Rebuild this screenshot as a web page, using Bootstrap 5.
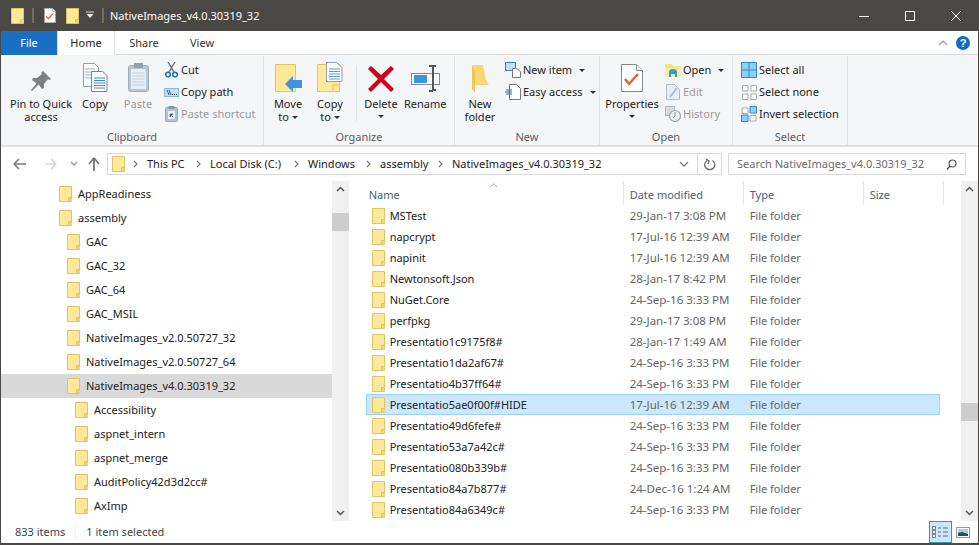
<!doctype html>
<html lang="en"><head><meta charset="utf-8"><title>NativeImages_v4.0.30319_32</title>
<link href="https://cdn.jsdelivr.net/npm/bootstrap@5.3.0/dist/css/bootstrap.min.css" rel="stylesheet">
<style>
html,body{height:545px;overflow:hidden;background:#fff}
body{font-family:"Noto Sans","Open Sans",sans-serif;font-size:11px;color:#222;line-height:1.2}
.win{width:979px;height:545px;border:solid #4a4845;border-width:0 1px 2px 1px;overflow:hidden}
svg{display:block;flex:none}
.titlebar{height:31px;background:#4a4845;color:#fff;font-size:11px;padding-left:11px;margin:0 -1px}
.qsep{width:2px;height:15px;background:#6f6d6a}
.q-s1{margin-left:8px}.q-d{margin-left:10px}.q-f{margin-left:10px}.q-c{margin-left:7px}.q-s2{margin-left:8px}.q-t{margin-left:6px}
.wc{width:46px;height:31px}
.tabrow{height:24px;border-bottom:1px solid #dadbdc}
.tabf{width:56px;height:24px;background:#1a6fc4;color:#fff}
.tabh{width:58px;height:24px;background:#fff;border:solid #dadbdc;border-width:0 1px;margin-bottom:-1px}
.tabo{width:58px;height:23px;color:#333}
.ribbon{height:92px;background:#f5f6f7;border-bottom:2px solid #dfe0e1}
.grp{height:90px;border-right:1px solid #dfe1e3;margin-top:1px}
.g-clip{width:263px}.g-org{width:191px}.g-new{width:145px}.g-open{width:133px}.g-sel{width:115px}
.grp-name{height:15px;color:#5c5c5c;text-align:center;margin-top:auto;margin-bottom:1px}
.grp-body{padding-top:6px;height:74px}
.b-org{padding-left:6px}.b-new{padding-left:7px;gap:7px}.b-open{padding-left:3px;gap:4px}.b-sel{padding-left:8px;margin-top:-3px}
.lbtn{text-align:center;flex:none}
.w36{width:36px}.w72{width:72px}.w50{width:50px}.w48{width:48px}.w46{width:46px}.w42{width:42px}.w58{width:58px}
.lbtn .ico{height:30px;display:flex;justify-content:center;align-items:flex-end}
.lbtn .txt{margin-top:5px;line-height:13px;white-space:nowrap}
.caret-d{display:inline-block;width:0;height:0;border:solid transparent;border-width:3px 3px 0;border-top-color:#333;vertical-align:2px;margin-left:3px}
.caret-s{margin-left:5px}
.caret-b{display:block;width:0;height:0;border:solid transparent;border-width:3px 3px 0;border-top-color:#333;margin:5px auto 0}
.scol{margin-top:-3px}
.sbtn{height:22px;white-space:nowrap;gap:2px}
.sicon{width:16px;display:flex;justify-content:center}
.off{color:#9b9b9b}
.vsep{width:1px;height:56px;background:#e1e2e3;margin:3px 1px 0 2px}
.addr{height:34px}
.nav-btns{left:12px;top:9px}
.pathbox{margin-left:106px;width:615px;height:22px;border:1px solid #d9d9d9;padding-left:4px}
.crumb{display:flex;justify-content:space-between;align-items:center;white-space:nowrap;padding-right:9px;color:#222}
.cr0{margin-left:8px;margin-right:9px}
.cw63{width:63px}.cw98{width:98px}.cw72{width:72px}
.refresh{width:24px;border-left:1px solid #d9d9d9}
.searchbox{margin-left:6px;width:238px;height:22px;border:1px solid #d9d9d9;color:#6d6d6d;padding:0 8px}
.main{height:340px}
.tree{width:331px;height:340px;overflow:hidden;padding-top:1px}
.trow{height:24px;white-space:nowrap;gap:6px}
.l1{padding-left:58px}.l2{padding-left:66px}.l3{padding-left:74px}
.trow.on{background:#d9d9d9}
.sbar{width:17px;height:340px;background:#f0f0f0;flex:none;position:relative}
.thumb{height:18px;background:#cdcdcd;width:17px;position:absolute;left:0}
.th1{top:32px}.th2{top:222px}
.arrow-u{position:absolute;left:4px;top:5px}
.arrow-d{position:absolute;left:4px;bottom:5px}
.files{width:613px;height:340px;overflow:hidden;padding-left:17px;position:relative}
.fhead{height:24px;color:#4c607a}
.fh{height:24px;border-right:1px solid #e5e5e5;padding-top:7px}
.c-name{width:257px;padding-left:3px}
.fh.c-name{width:258px}
.c-date{width:120px;padding-left:6px}
.c-type{width:120px;padding-left:6px}
.c-size{width:80px;padding-left:6px}
.frow{height:21px;width:574px;border:1px solid transparent;white-space:nowrap}
.frow.on{background:#cce8ff;border-color:#99d1ff}
.frow .c-name{display:flex;align-items:center;gap:5px;padding-left:5px}
.frow .c-date{color:#666;font-size:11.500px}
.frow .c-type{color:#666}
.sortup{position:absolute;left:140px;top:2px}
.status{height:22px;padding-left:14px;color:#444}
.stsep{width:1px;height:13px;background:#eee;margin:0 10px}
.viewa{width:23px;height:22px;background:#cce8ff;border:1px solid #3d95ac;margin-left:auto}
.viewb{margin:0 8px 0 4px}
</style></head><body>
<svg width="0" height="0" class="position-absolute"><defs>
<symbol id="fd" viewBox="0 0 13 16"><path d="M.5.5h12v15H.5z" fill="#fee89a" stroke="#e5c264"/><path d="M9.5 15V11.5H12.5" fill="none" stroke="#e5c264"/><path d="M10 15v-3h2.500v3z" fill="#fbd774"/></symbol>
<symbol id="chk" viewBox="0 0 22 28"><path d="M.5.500h15l6 6v21H.500z" fill="#fff" stroke="#8a8a8a"/><path d="M15.500.5v6h6" fill="#eee" stroke="#8a8a8a"/><path d="M4 15l4 5 9-10" fill="none" stroke="#e2622a" stroke-width="2.400"/></symbol>
<symbol id="sp" viewBox="0 0 5 8"><path d="M1 1l3 3-3 3" fill="none" stroke="#777" stroke-width="1.200"/></symbol>
</defs></svg>
<div class="win d-flex flex-column">
 <div class="titlebar d-flex align-items-center">
  <svg width="13" height="16"><use href="#fd"/></svg>
  <div class="qsep q-s1"></div>
  <svg width="12" height="15" class="q-d" viewBox="0 0 22 28"><use href="#chk"/></svg>
  <svg width="13" height="16" class="q-f"><use href="#fd"/></svg>
  <svg width="8" height="9" class="q-c" viewBox="0 0 8 9"><path d="M0 1h8" stroke="#ddd"/><path d="M.5 3h7L4 7z" fill="#eee"/></svg>
  <div class="qsep q-s2"></div>
  <span class="q-t">NativeImages_v4.0.30319_32</span>
  <div class="ms-auto d-flex">
   <div class="wc d-flex align-items-center justify-content-center"><svg width="10" height="10"><path d="M0 5.500h10" stroke="#fff"/></svg></div>
   <div class="wc d-flex align-items-center justify-content-center"><svg width="10" height="10"><path d="M.5.5h9v9h-9z" fill="none" stroke="#fff"/></svg></div>
   <div class="wc d-flex align-items-center justify-content-center"><svg width="10" height="10"><path d="M0 0l10 10M10 0L0 10" stroke="#fff"/></svg></div>
  </div>
 </div>
 <div class="tabrow d-flex">
  <div class="tabf d-flex align-items-center justify-content-center">File</div>
  <div class="tabh d-flex align-items-center justify-content-center">Home</div>
  <div class="tabo d-flex align-items-center justify-content-center">Share</div>
  <div class="tabo d-flex align-items-center justify-content-center">View</div>
  <div class="ms-auto d-flex align-items-center pe-2 gap-2">
   <svg width="10" height="6"><path d="M1 5l4-4 4 4" fill="none" stroke="#999" stroke-width="1.200"/></svg>
   <svg width="14" height="14" viewBox="0 0 14 14"><circle cx="7" cy="7" r="7" fill="#0f6cbd"/><text x="7" y="11" font-size="11" font-weight="700" fill="#fff" text-anchor="middle" font-family="Liberation Sans">?</text></svg>
  </div>
 </div>
 <div class="ribbon d-flex">
  <div class="grp g-clip d-flex flex-column">
   <div class="grp-body d-flex ps-1">
    <div class="lbtn w72"><div class="ico"><svg width="22" height="22" viewBox="0 0 22 22"><path d="M13 1l8 8-2 1-1-1-4 5 0 4-2 1-3.500-4.500L2 21l-1-1 5.500-6.500L2 10l1-2h4l5-4-1-1z" fill="#7f7f7f"/></svg></div><div class="txt">Pin to Quick<br>access</div></div>
    <div class="lbtn w36"><div class="ico"><svg width="25" height="29" viewBox="0 0 25 29"><path d="M.5.500h11l4 4v19H.500z" fill="#fff" stroke="#8b9fb5"/><path d="M2 6h10M2 9h10M2 12h10M2 15h10" stroke="#99b5d5"/><path d="M8.500 8.500h11l4.500 4v16H8.500z" fill="#fff" stroke="#6e8aa8"/><path d="M11 15h11M11 17.500h11M11 20h11M11 22.500h11M11 25h11" stroke="#3d85cc"/></svg></div><div class="txt">Copy</div></div>
    <div class="lbtn off w50"><div class="ico"><svg width="21" height="29" viewBox="0 0 21 29"><rect x=".5" y="2.500" width="20" height="26" rx="2" fill="#b9c6d4" stroke="#a2adb9"/><rect x="3" y="6" width="15" height="20" fill="#e8eef6"/><path d="M4 10h13M4 13h13M4 16h13M4 19h13M4 22h13" stroke="#c5d2e3"/><rect x="6" y="0" width="9" height="5" fill="#93a0ad"/></svg></div><div class="txt">Paste</div></div>
    <div class="d-flex flex-column scol">
     <div class="sbtn d-flex align-items-center"><div class="sicon"><svg width="13" height="16" viewBox="0 0 13 16"><path d="M3 0l6 10M10 0L4 10" stroke="#6b6b6b" stroke-width="1.300"/><circle cx="3" cy="12.500" r="2.300" fill="none" stroke="#1e6fb4" stroke-width="1.500"/><circle cx="10" cy="12.500" r="2.300" fill="none" stroke="#1e6fb4" stroke-width="1.500"/></svg></div>Cut</div>
     <div class="sbtn d-flex align-items-center"><div class="sicon"><svg width="15" height="9" viewBox="0 0 15 9"><rect x=".5" y=".5" width="14" height="8" fill="#bfe0f7" stroke="#8cb7d8"/><path d="M3 2l2 5M5 2l2 5" stroke="#234" stroke-width=".8"/><path d="M8 6.500h1M10 6.500h1M12 6.500h1" stroke="#234"/></svg></div>Copy path</div>
     <div class="sbtn d-flex align-items-center off"><div class="sicon"><svg width="13" height="16" viewBox="0 0 13 16"><rect x=".5" y="1.500" width="12" height="14" rx="1" fill="#b6c3d1" stroke="#98a6b4"/><rect x="3.500" y="0" width="6" height="3" fill="#8c98a4"/><rect x="3" y="5" width="7" height="8" fill="#eef2f6"/><path d="M5 11V8h3M5 8l3 3" stroke="#6f7f8f"/></svg></div>Paste shortcut</div>
    </div>
   </div>
   <div class="grp-name">Clipboard</div>
  </div>
  <div class="grp g-org d-flex flex-column">
   <div class="grp-body d-flex b-org">
    <div class="lbtn w36"><div class="ico"><svg width="27" height="28" viewBox="0 0 27 28"><path d="M.5.500h20v27H.5z" fill="#fee89a" stroke="#e5c264"/><path d="M10 20l8-8v4h9v8h-9v4z" fill="#3d95e0"/></svg></div><div class="txt">Move<br>to<i class="caret-d"></i></div></div>
    <div class="lbtn w48"><div class="ico"><svg width="26" height="30" viewBox="0 0 26 30"><path d="M.5 2.500h22v27H.5z" fill="#fee89a" stroke="#e5c264"/><path d="M16 29V23h6" fill="none" stroke="#e5c264"/><path d="M9.500.5h10l5.500 5v14H9.500z" fill="#fff" stroke="#8b9fb5"/><path d="M12 7h11M12 9.500h11M12 12h11M12 14.500h11M12 17h11" stroke="#5d9bd5"/></svg></div><div class="txt">Copy<br>to<i class="caret-d"></i></div></div>
    <div class="vsep"></div>
    <div class="lbtn w46"><div class="ico"><svg width="26" height="26" viewBox="0 0 26 26"><path d="M3 0l10 9 10-9 3 3-10 10 10 10-3 3-10-10L3 26l-3-3 10-10L0 3z" fill="#d0011b"/></svg></div><div class="txt">Delete<i class="caret-b"></i></div></div>
    <div class="lbtn w42"><div class="ico"><svg width="29" height="27" viewBox="0 0 29 27"><rect x=".5" y="8.500" width="28" height="11" fill="#fff" stroke="#8a8a8a"/><rect x="3" y="10" width="13" height="8" fill="#3d95e0"/><path d="M18 1h4M25 1h-3v24h3M18 26h4" fill="none" stroke="#555" stroke-width="2"/></svg></div><div class="txt">Rename</div></div>
   </div>
   <div class="grp-name">Organize</div>
  </div>
  <div class="grp g-new d-flex flex-column">
   <div class="grp-body d-flex b-new">
    <div class="lbtn w36"><div class="ico"><svg width="18" height="27" viewBox="0 0 18 27"><path d="M1 0h11l3 15 3 5H4v7L1 24z" fill="#fbd774"/><path d="M1 0v24l3 3V7z" fill="#f0c659"/></svg></div><div class="txt">New<br>folder</div></div>
    <div class="d-flex flex-column scol">
     <div class="sbtn d-flex align-items-center"><div class="sicon"><svg width="16" height="16" viewBox="0 0 16 16"><rect x=".5" y=".5" width="10" height="8" fill="#bfe0f7" stroke="#3b7fb5"/><path d="M7.500 6.500h4l4 3v6h-8z" fill="#fff" stroke="#777"/></svg></div>New item<i class="caret-d caret-s"></i></div>
     <div class="sbtn d-flex align-items-center"><div class="sicon"><svg width="16" height="16" viewBox="0 0 16 16"><path d="M4.500.5h7l4 4v11h-11z" fill="#fff" stroke="#777"/><path d="M0 8h7M1 6h6M1 10h6" stroke="#1e6fb4"/></svg></div>Easy access<i class="caret-d caret-s"></i></div>
    </div>
   </div>
   <div class="grp-name">New</div>
  </div>
  <div class="grp g-open d-flex flex-column">
   <div class="grp-body d-flex b-open">
    <div class="lbtn w58"><div class="ico"><svg width="22" height="28"><use href="#chk"/></svg></div><div class="txt">Properties<i class="caret-b"></i></div></div>
    <div class="d-flex flex-column scol">
     <div class="sbtn d-flex align-items-center"><div class="sicon"><svg width="16" height="14" viewBox="0 0 16 14"><path d="M0 1h6l2 2h8v11H0z" fill="#fddf7e"/><path d="M0 5h16v9H0z" fill="#fbe9a9"/><path d="M4 14V9a4 3 0 0 1 8 0v5h-2v-3H6v3z" fill="#2d9fc4"/></svg></div>Open<i class="caret-d caret-s"></i></div>
     <div class="sbtn d-flex align-items-center off"><div class="sicon"><svg width="14" height="16" viewBox="0 0 14 16"><path d="M.5.500h8l5 5v10H.5z" fill="#e7eef6" stroke="#b0bccb"/><path d="M4 13L11 4" stroke="#a9bad0" stroke-width="2"/></svg></div>Edit</div>
     <div class="sbtn d-flex align-items-center off"><div class="sicon"><svg width="16" height="16" viewBox="0 0 16 16"><rect x=".5" y=".5" width="9" height="9" fill="#d8dde3" stroke="#b0b6bd"/><circle cx="10" cy="10" r="5.500" fill="#eef0f2" stroke="#9aa3ad" stroke-width="1.200"/><path d="M10 6v4l-2 2" stroke="#8a939d" fill="none"/></svg></div>History</div>
    </div>
   </div>
   <div class="grp-name">Open</div>
  </div>
  <div class="grp g-sel d-flex flex-column">
   <div class="grp-body b-sel">
     <div class="sbtn d-flex align-items-center"><div class="sicon"><svg width="16" height="16" viewBox="0 0 16 16"><path d="M.5.5h15v15H.5z" fill="#8ed0f5" stroke="#2e8bc9"/><path d="M8 0v16M0 8h16" stroke="#2e8bc9"/></svg></div>Select all</div>
     <div class="sbtn d-flex align-items-center"><div class="sicon"><svg width="15" height="15" viewBox="0 0 15 15"><path d="M.5.500h5.500v5.500H.5zM9 .5h5.500v5.500H9zM.5 9h5.500v5.500H.5zM9 9h5.500v5.500H9z" fill="#fff" stroke="#aaa"/></svg></div>Select none</div>
     <div class="sbtn d-flex align-items-center"><div class="sicon"><svg width="16" height="16" viewBox="0 0 16 16"><path d="M1 2h6v5.500H1z" fill="#fff" stroke="#aaa"/><path d="M9 .5h6.500V7H9zM.5 9H7v6.500H.5z" fill="#8ed0f5" stroke="#2e8bc9"/><path d="M9 9.500h6V15H9z" fill="#fff" stroke="#aaa"/></svg></div>Invert selection</div>
   </div>
   <div class="grp-name">Select</div>
  </div>
 </div>
 <div class="addr d-flex align-items-center position-relative">
  <div class="position-absolute nav-btns">
   <svg width="92" height="16" viewBox="0 0 92 16"><path d="M1 8h12M1 8l5-5M1 8l5 5" fill="none" stroke="#7a7a7a" stroke-width="1.600"/><path d="M32 8h11M43 8l-5-5M43 8l-5 5" fill="none" stroke="#d5d5d5" stroke-width="1.600"/><path d="M58 6l3 3 3-3" fill="none" stroke="#9a9a9a" stroke-width="1.300"/><path d="M81 15V3M81 2l-5 6M81 2l5 6" fill="none" stroke="#777" stroke-width="1.800"/></svg>
  </div>
  <div class="pathbox d-flex align-items-center">
   <svg width="13" height="16"><use href="#fd"/></svg>
   <svg width="5" height="8" class="cr0"><use href="#sp"/></svg>
   <span class="crumb cw63">This PC<svg width="5" height="8"><use href="#sp"/></svg></span>
   <span class="crumb cw98">Local Disk (C:)<svg width="5" height="8"><use href="#sp"/></svg></span>
   <span class="crumb cw72">Windows<svg width="5" height="8"><use href="#sp"/></svg></span>
   <span class="crumb cw72">assembly<svg width="5" height="8"><use href="#sp"/></svg></span>
   <span class="crumb">NativeImages_v4.0.30319_32</span>
   <div class="ms-auto d-flex align-items-center h-100">
    <svg width="10" height="6" class="me-2"><path d="M1 1l4 4 4-4" fill="none" stroke="#777" stroke-width="1.300"/></svg>
    <div class="h-100 d-flex align-items-center justify-content-center refresh"><svg width="12" height="13" viewBox="0 0 12 13"><path d="M3 2.500a5 5 0 1 0 5.500 0" fill="none" stroke="#666" stroke-width="1.300"/><path d="M2 1l3 2-1 3" fill="none" stroke="#666" stroke-width="1.300"/></svg></div>
   </div>
  </div>
  <div class="searchbox d-flex align-items-center justify-content-between"><span>Search NativeImages_v4.0.30319_32</span><svg width="11" height="11" viewBox="0 0 11 11"><circle cx="6.500" cy="4.500" r="3.500" fill="none" stroke="#555" stroke-width="1.200"/><path d="M4 7l-3 3.500" stroke="#555" stroke-width="1.500"/></svg></div>
 </div>
 <div class="main d-flex">
  <div class="tree">
   <div class="trow d-flex align-items-center l1"><svg width="13" height="16"><use href="#fd"/></svg>AppReadiness</div>
   <div class="trow d-flex align-items-center l1"><svg width="13" height="16"><use href="#fd"/></svg>assembly</div>
   <div class="trow d-flex align-items-center l2"><svg width="13" height="16"><use href="#fd"/></svg>GAC</div>
   <div class="trow d-flex align-items-center l2"><svg width="13" height="16"><use href="#fd"/></svg>GAC_32</div>
   <div class="trow d-flex align-items-center l2"><svg width="13" height="16"><use href="#fd"/></svg>GAC_64</div>
   <div class="trow d-flex align-items-center l2"><svg width="13" height="16"><use href="#fd"/></svg>GAC_MSIL</div>
   <div class="trow d-flex align-items-center l2"><svg width="13" height="16"><use href="#fd"/></svg>NativeImages_v2.0.50727_32</div>
   <div class="trow d-flex align-items-center l2"><svg width="13" height="16"><use href="#fd"/></svg>NativeImages_v2.0.50727_64</div>
   <div class="trow d-flex align-items-center l2 on"><svg width="13" height="16"><use href="#fd"/></svg>NativeImages_v4.0.30319_32</div>
   <div class="trow d-flex align-items-center l3"><svg width="13" height="16"><use href="#fd"/></svg>Accessibility</div>
   <div class="trow d-flex align-items-center l3"><svg width="13" height="16"><use href="#fd"/></svg>aspnet_intern</div>
   <div class="trow d-flex align-items-center l3"><svg width="13" height="16"><use href="#fd"/></svg>aspnet_merge</div>
   <div class="trow d-flex align-items-center l3"><svg width="13" height="16"><use href="#fd"/></svg>AuditPolicy42d3d2cc#</div>
   <div class="trow d-flex align-items-center l3"><svg width="13" height="16"><use href="#fd"/></svg>AxImp</div>
  </div>
  <div class="sbar">
   <svg class="arrow-u" width="9" height="6"><path d="M1 5l3.500-3.500L8 5" fill="none" stroke="#555" stroke-width="1.500"/></svg>
   <div class="thumb th1"></div>
   <svg class="arrow-d" width="9" height="6"><path d="M1 1l3.500 3.500L8 1" fill="none" stroke="#555" stroke-width="1.500"/></svg>
  </div>
  <div class="files">
   <svg class="sortup" width="9" height="5"><path d="M1 4l3.500-3L8 4" fill="none" stroke="#a8a8a8"/></svg>
   <div class="fhead d-flex">
    <div class="fh c-name">Name</div><div class="fh c-date">Date modified</div><div class="fh c-type">Type</div><div class="fh c-size">Size</div>
   </div>
   <div class="frow d-flex align-items-center"><div class="c-name"><svg width="13" height="16"><use href="#fd"/></svg>MSTest</div><div class="c-date">29-Jan-17 3:08 PM</div><div class="c-type">File folder</div></div>
   <div class="frow d-flex align-items-center"><div class="c-name"><svg width="13" height="16"><use href="#fd"/></svg>napcrypt</div><div class="c-date">17-Jul-16 12:39 AM</div><div class="c-type">File folder</div></div>
   <div class="frow d-flex align-items-center"><div class="c-name"><svg width="13" height="16"><use href="#fd"/></svg>napinit</div><div class="c-date">17-Jul-16 12:39 AM</div><div class="c-type">File folder</div></div>
   <div class="frow d-flex align-items-center"><div class="c-name"><svg width="13" height="16"><use href="#fd"/></svg>Newtonsoft.Json</div><div class="c-date">28-Jan-17 8:42 PM</div><div class="c-type">File folder</div></div>
   <div class="frow d-flex align-items-center"><div class="c-name"><svg width="13" height="16"><use href="#fd"/></svg>NuGet.Core</div><div class="c-date">24-Sep-16 3:33 PM</div><div class="c-type">File folder</div></div>
   <div class="frow d-flex align-items-center"><div class="c-name"><svg width="13" height="16"><use href="#fd"/></svg>perfpkg</div><div class="c-date">29-Jan-17 3:08 PM</div><div class="c-type">File folder</div></div>
   <div class="frow d-flex align-items-center"><div class="c-name"><svg width="13" height="16"><use href="#fd"/></svg>Presentatio1c9175f8#</div><div class="c-date">28-Jan-17 1:49 AM</div><div class="c-type">File folder</div></div>
   <div class="frow d-flex align-items-center"><div class="c-name"><svg width="13" height="16"><use href="#fd"/></svg>Presentatio1da2af67#</div><div class="c-date">24-Sep-16 3:33 PM</div><div class="c-type">File folder</div></div>
   <div class="frow d-flex align-items-center"><div class="c-name"><svg width="13" height="16"><use href="#fd"/></svg>Presentatio4b37ff64#</div><div class="c-date">24-Sep-16 3:33 PM</div><div class="c-type">File folder</div></div>
   <div class="frow d-flex align-items-center on"><div class="c-name"><svg width="13" height="16"><use href="#fd"/></svg>Presentatio5ae0f00f#HIDE</div><div class="c-date">17-Jul-16 12:39 AM</div><div class="c-type">File folder</div></div>
   <div class="frow d-flex align-items-center"><div class="c-name"><svg width="13" height="16"><use href="#fd"/></svg>Presentatio49d6fefe#</div><div class="c-date">24-Sep-16 3:33 PM</div><div class="c-type">File folder</div></div>
   <div class="frow d-flex align-items-center"><div class="c-name"><svg width="13" height="16"><use href="#fd"/></svg>Presentatio53a7a42c#</div><div class="c-date">24-Sep-16 3:33 PM</div><div class="c-type">File folder</div></div>
   <div class="frow d-flex align-items-center"><div class="c-name"><svg width="13" height="16"><use href="#fd"/></svg>Presentatio080b339b#</div><div class="c-date">24-Sep-16 3:33 PM</div><div class="c-type">File folder</div></div>
   <div class="frow d-flex align-items-center"><div class="c-name"><svg width="13" height="16"><use href="#fd"/></svg>Presentatio84a7b877#</div><div class="c-date">24-Dec-16 1:24 AM</div><div class="c-type">File folder</div></div>
   <div class="frow d-flex align-items-center"><div class="c-name"><svg width="13" height="16"><use href="#fd"/></svg>Presentatio84a6349c#</div><div class="c-date">24-Sep-16 3:33 PM</div><div class="c-type">File folder</div></div>
  </div>
  <div class="sbar">
   <svg class="arrow-u" width="9" height="6"><path d="M1 5l3.500-3.500L8 5" fill="none" stroke="#555" stroke-width="1.500"/></svg>
   <div class="thumb th2"></div>
   <svg class="arrow-d" width="9" height="6"><path d="M1 1l3.500 3.500L8 1" fill="none" stroke="#555" stroke-width="1.500"/></svg>
  </div>
 </div>
 <div class="status d-flex align-items-center">
  <span>833 items</span><div class="stsep"></div><span>1 item selected</span>
  <div class="viewa d-flex align-items-center justify-content-center"><svg width="17" height="13" viewBox="0 0 17 13"><path d="M.5.500h3v3h-3zM.5 4.500h3v3h-3zM.5 8.500h3v3h-3z" fill="#fff" stroke="#777"/><path d="M6 2h3M11 2h5M6 6h3M11 6h5M6 10h3M11 10h5" stroke="#666"/></svg></div>
  <div class="viewb"><svg width="14" height="11" viewBox="0 0 14 11"><rect x=".5" y=".5" width="13" height="10" fill="#fff" stroke="#999"/><rect x="2" y="2" width="10" height="7" fill="#a4cde8"/><path d="M2 9V6l4-1 6 2v2z" fill="#2d4a5a"/></svg></div>
 </div>
</div>
<script src="https://cdn.jsdelivr.net/npm/bootstrap@5.3.0/dist/js/bootstrap.bundle.min.js"></script>
</body></html>
